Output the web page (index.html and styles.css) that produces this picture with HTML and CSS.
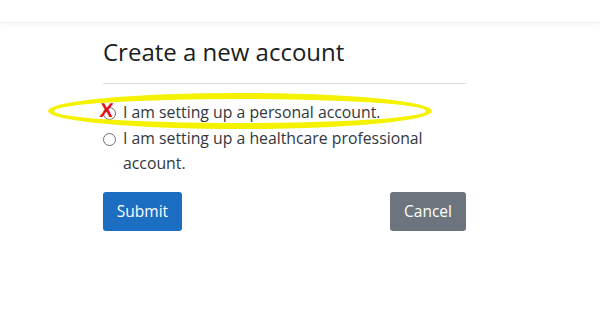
FILE: index.html
```html
<!DOCTYPE html>
<html lang="en">
<head>
<meta charset="utf-8">
<title>Create a new account</title>
<link rel="stylesheet" href="styles.css">
</head>
<body>
<header class="topbar"></header>
<main class="page">
  <section class="form-card">
    <h3 class="title">Create a new account</h3>
    <hr class="rule">
    <div class="options">
      <label class="option">
        <input type="radio" name="acct" class="radio">
        <span class="option-text">I am setting up a personal account.</span>
        <span class="mark-x">X</span>
      </label>
      <label class="option">
        <input type="radio" name="acct" class="radio">
        <span class="option-text">I am setting up a healthcare professional account.</span>
      </label>
    </div>
    <div class="actions">
      <button class="btn btn-primary" type="button">Submit</button>
      <button class="btn btn-secondary" type="button">Cancel</button>
    </div>
    <div class="highlight"></div>
  </section>
</main>
</body>
</html>
```

FILE: styles.css
```css
html, body {
  margin: 0;
  padding: 0;
  background: #ffffff;
}
body {
  font-family: "Open Sans", "Noto Sans", sans-serif;
  color: #212529;
  width: 600px;
  height: 315px;
  overflow: hidden;
}
.topbar {
  height: 22px;
  background: #ffffff;
  border-bottom: 1px solid #f1f1f1;
  box-shadow: 0 2px 6px rgba(0, 0, 0, 0.035);
}
.page {
  padding: 12px 0 0 103px;
}
.form-card {
  position: relative;
  width: 363px;
}
.title {
  margin: 0;
  font-size: 24px;
  font-weight: 500;
  line-height: 34px;
  color: #1a1d21;
}
.rule {
  margin: 14px 0 0 0;
  border: 0;
  border-top: 1px solid #dcdfe3;
}
.options {
  margin-top: 16px;
  display: flex;
  flex-direction: column;
}
.option {
  position: relative;
  display: flex;
  align-items: flex-start;
  gap: 7px;
  font-size: 15.8px;
  line-height: 25.5px;
  color: #33383d;
}
.radio {
  appearance: none;
  -webkit-appearance: none;
  margin: 7px 0 0 0;
  width: 13px;
  height: 13px;
  flex: 0 0 13px;
  border: 1px solid #6b6f73;
  border-radius: 50%;
  background: #fff;
}
.option-text {
  flex: 1;
}
.mark-x {
  position: absolute;
  left: -3px;
  top: 0;
  font-family: "Liberation Sans", Arial, sans-serif;
  font-weight: 700;
  font-size: 20px;
  line-height: 20px;
  color: #e0101a;
  transform: skewX(-6deg);
}
.actions {
  margin-top: 15px;
  display: flex;
  justify-content: space-between;
}
.btn {
  font-family: "Open Sans", "Noto Sans", sans-serif;
  font-size: 15.5px;
  line-height: 21px;
  height: 39px;
  padding: 0 12px;
  border: 0;
  border-radius: 3px;
  color: #ffffff;
}
.btn-primary {
  background: #1b6ec2;
  width: 79px;
}
.btn-secondary {
  background: #6c757d;
  width: 76px;
}
.highlight {
  position: absolute;
  box-sizing: border-box;
  left: -55px;
  top: 58px;
  width: 384px;
  height: 36px;
  border: 6px solid #f5f200;
  border-radius: 50%;
  pointer-events: none;
}
```
